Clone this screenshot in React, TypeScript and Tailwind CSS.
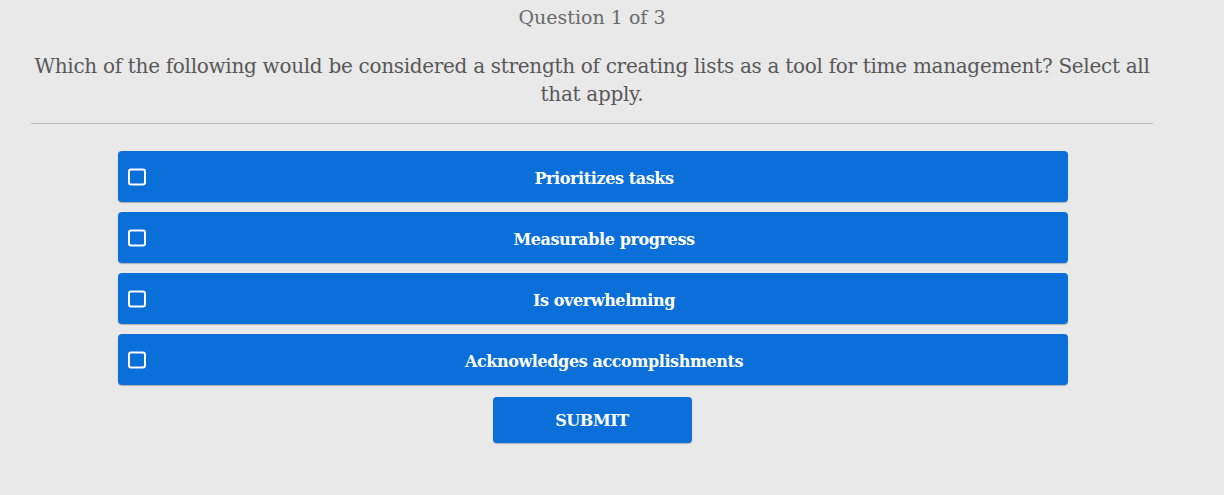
const options = [
  'Prioritizes tasks',
  'Measurable progress',
  'Is overwhelming',
  'Acknowledges accomplishments',
];

export default function App() {
  return (
    <div
      className="h-[495px] w-[1224px] overflow-hidden bg-[#e8e9e8] text-[#5a5a5a]"
      style={{ fontFamily: '"DejaVu Serif", "Liberation Serif", serif' }}
    >
      <div className="flex w-[1184px] flex-col items-center">
        <div className="pt-[5px] text-[19px] leading-[24px] text-[#6b6b6b]">Question 1 of 3</div>
        <p className="mt-[23px] w-[1130px] text-center text-[20px] leading-[28px] tracking-[-0.3px] text-[#585858]">
          Which of the following would be considered a strength of creating lists as a tool for time management? Select all that apply.
        </p>
        <div className="mt-[15px] h-px w-[1122px] bg-[#b9bab9]" />

        <div className="mt-[27px] flex w-[950px] translate-x-[1px] flex-col gap-[10px]">
          {options.map((label) => (
            <button
              key={label}
              className="relative flex h-[51px] items-center justify-center rounded-[4px] bg-[#0b6fd9] pl-[22px] pt-[4px] text-[16px] font-bold tracking-[-0.4px] text-white shadow-[0_1px_1px_rgba(0,0,0,0.25)]"
            >
              <span className="absolute left-[10px] top-1/2 h-[17px] w-[18px] -translate-y-1/2 rounded-[3px] border-2 border-white" />
              {label}
            </button>
          ))}
        </div>

        <button className="mt-[12px] h-[46px] w-[199px] rounded-[4px] bg-[#0b6fd9] pt-[2px] text-[16px] font-bold tracking-[-0.4px] text-white shadow-[0_1px_1px_rgba(0,0,0,0.25)]">
          SUBMIT
        </button>
      </div>
    </div>
  );
}
